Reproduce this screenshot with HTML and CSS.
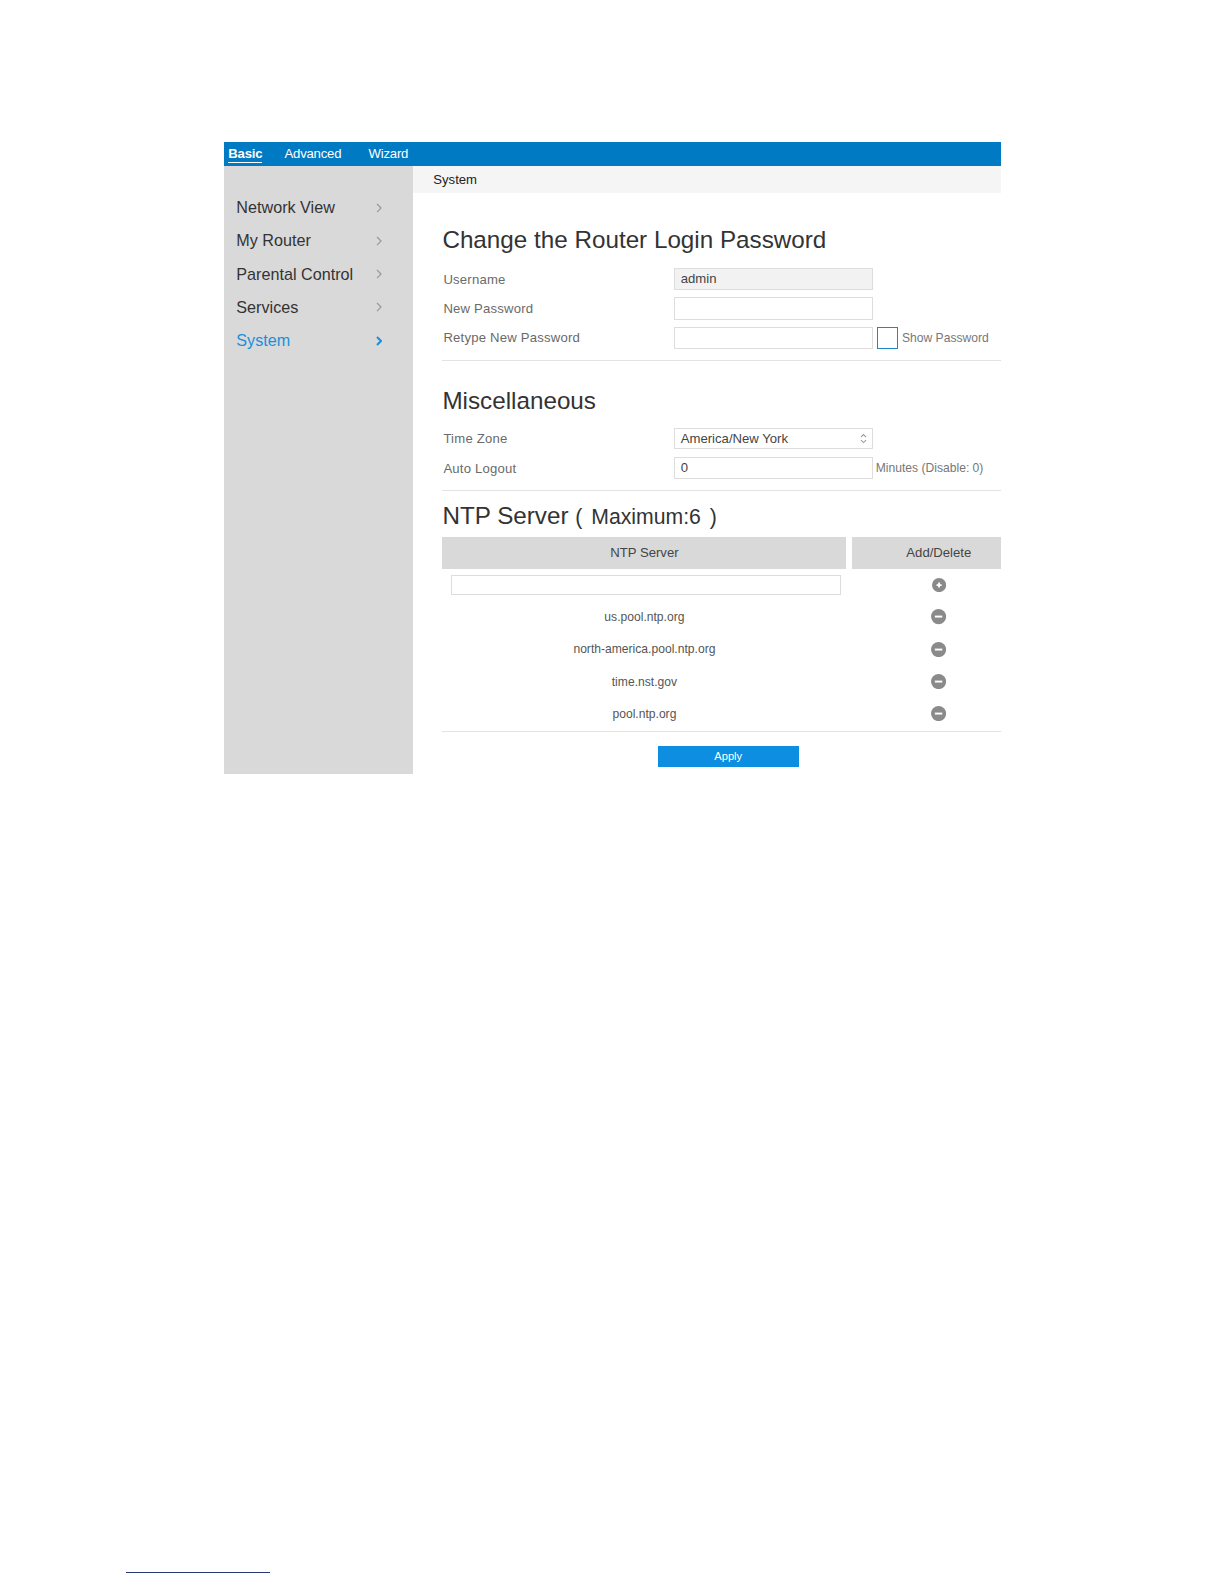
FILE: index.html
```html
<!doctype html>
<html lang="en">
<head>
	<meta charset="UTF-8" />
	<title>System</title>
<link rel="stylesheet" href="styles.css">
</head>
<body>
	<section id="wrap">
		<nav class="topbar">
			<a href="javascript:;" class="active">Basic</a>
			<a href="javascript:;">Advanced</a>
			<a href="javascript:;">Wizard</a>
		</nav>
		<div class="main">
			<ul class="side">
				<li><span>Network View</span><svg class="chev" width="6" height="10" viewBox="0 0 6 10"><polyline points="1,1 5,5 1,9"/></svg></li>
				<li><span>My Router</span><svg class="chev" width="6" height="10" viewBox="0 0 6 10"><polyline points="1,1 5,5 1,9"/></svg></li>
				<li><span>Parental Control</span><svg class="chev" width="6" height="10" viewBox="0 0 6 10"><polyline points="1,1 5,5 1,9"/></svg></li>
				<li><span>Services</span><svg class="chev" width="6" height="10" viewBox="0 0 6 10"><polyline points="1,1 5,5 1,9"/></svg></li>
				<li class="active"><span>System</span><svg class="chev" width="6" height="10" viewBox="0 0 6 10"><polyline points="1,1 5,5 1,9"/></svg></li>
			</ul>
			<div class="content">
				<div class="crumb">System</div>
				<div class="panel">
					<h2 class="first">Change the Router Login Password</h2>
					<div class="row">
						<label>Username</label>
						<div class="field gray">admin</div>
					</div>
					<div class="row">
						<label>New Password</label>
						<div class="field"></div>
					</div>
					<div class="row">
						<label>Retype New Password</label>
						<div class="field"></div>
						<span class="check"></span>
						<span class="note">Show Password</span>
					</div>
					<hr />

					<h2>Miscellaneous</h2>
					<div class="row">
						<label>Time Zone</label>
						<div class="field select">
							<span>America/New York</span>
							<svg width="7" height="11" viewBox="0 0 7 11"><polyline points="1,4 3.5,1.5 6,4"/><polyline points="1,7 3.5,9.5 6,7"/></svg>
						</div>
					</div>
					<div class="row">
						<label>Auto Logout</label>
						<div class="field">0</div>
						<span class="note tight">Minutes (Disable: 0)</span>
					</div>
					<hr />

					<h2 class="ntp">NTP Server <small>( Maximum:6 )</small></h2>
					<div class="table">
						<div class="th">NTP Server</div>
						<div class="th op">Add/Delete</div>

						<div class="td"><div class="add-input"></div></div>
						<div class="td op"><svg class="ic" width="14" height="14" viewBox="0 0 14 14"><circle cx="7" cy="7" r="7"/><path d="M4.5 7h5M7 4.5v5"/></svg></div>

						<div class="td">us.pool.ntp.org</div>
						<div class="td op"><svg class="ic" width="15" height="15" viewBox="0 0 14 14"><circle cx="7" cy="7" r="7"/><path d="M3.6 7h6.8"/></svg></div>

						<div class="td">north-america.pool.ntp.org</div>
						<div class="td op"><svg class="ic" width="15" height="15" viewBox="0 0 14 14"><circle cx="7" cy="7" r="7"/><path d="M3.6 7h6.8"/></svg></div>

						<div class="td">time.nst.gov</div>
						<div class="td op"><svg class="ic" width="15" height="15" viewBox="0 0 14 14"><circle cx="7" cy="7" r="7"/><path d="M3.6 7h6.8"/></svg></div>

						<div class="td">pool.ntp.org</div>
						<div class="td op"><svg class="ic" width="15" height="15" viewBox="0 0 14 14"><circle cx="7" cy="7" r="7"/><path d="M3.6 7h6.8"/></svg></div>
					</div>
					<hr class="last" />
					<a href="javascript:;" class="apply">Apply</a>
				</div>
			</div>
		</div>
	</section>
	<div class="footline"></div>
</body>
</html>
```

FILE: styles.css
```css
*{
	margin: 0;
	padding: 0;
	box-sizing: border-box;
}
html{
	zoom: 1.0101;
}
html, body{
	overflow: hidden;
}
body{
	background: #fff;
	font-family: "Liberation Sans", Arial, sans-serif;
	color: #333;
	padding-top: 141px;
}
#wrap{
	width: 769px;
	margin-left: 222px;
}
.topbar{
	height: 23px;
	background: #007ac2;
	display: flex;
	align-items: center;
	padding-left: 4px;
}
.topbar a{
	color: #fff;
	text-decoration: none;
	font-size: 13px;
	line-height: 15px;
	margin-right: 22px;
	letter-spacing: -0.2px;
	border-bottom: 1px solid transparent;
	margin-top: 1px;
}
.topbar a:nth-child(2){
	margin-right: 27px;
}
.topbar a.active{
	font-weight: bold;
	border-bottom-color: #fff;
}

.main{
	display: flex;
}
.side{
	width: 187px;
	background: #d9d9d9;
	list-style: none;
	padding-top: 25px;
}
.side li{
	height: 33px;
	display: flex;
	align-items: center;
	padding-left: 12px;
	font-size: 16px;
	color: #333;
}
.side li span{
	width: 138px;
}
.chev polyline{
	fill: none;
	stroke: #999;
	stroke-width: 1.2;
}
.side li.active{
	color: #1a8fdc;
}
.side li.active .chev polyline{
	stroke: #1a8fdc;
	stroke-width: 2;
}

.content{
	flex: 1;
	padding-bottom: 7px;
}
.crumb{
	height: 27px;
	background: #f5f5f5;
	padding-left: 20px;
	font-size: 13px;
	line-height: 27px;
	color: #222;
}
.panel{
	padding-left: 29px;
}
h2{
	font-size: 24px;
	font-weight: normal;
	line-height: 28px;
	color: #333;
	margin: 26px 0 9px;
}
h2.first{
	margin-top: 33px;
	margin-bottom: 10px;
}
h2.ntp{
	margin: 11px 0 7px;
}
h2 small{
	font-size: 21px;
	line-height: 20px;
	word-spacing: 3px;
}
.row{
	height: 29px;
	display: flex;
	align-items: center;
}
.row label{
	width: 229px;
	font-size: 13px;
	color: #6a6a6a;
	padding-left: 1px;
	letter-spacing: 0.2px;
}
.field{
	width: 197px;
	height: 22px;
	border: 1px solid #ddd;
	background: #fff;
	font-size: 13px;
	color: #444;
	line-height: 20px;
	padding-left: 6px;
}
.field.gray{
	background: #f2f2f2;
}
.select{
	display: flex;
	justify-content: space-between;
	align-items: center;
	padding-right: 5px;
	height: 21px;
}
.select svg polyline{
	fill: none;
	stroke: #999;
	stroke-width: 1;
}
.check{
	width: 21px;
	height: 22px;
	border: 1.5px solid #1e88c8;
	margin: 0 4px 0 4px;
}
.note{
	font-size: 12px;
	color: #777;
}
.note.tight{
	margin-left: 3px;
}
hr{
	border: 0;
	border-top: 1px solid #e3e3e3;
	margin-top: 6px;
}
.row + .row + hr{
	margin-top: 7px;
}

.table{
	display: grid;
	grid-template-columns: 400px 147px;
	column-gap: 6px;
}
.th{
	height: 31px;
	background: #d9d9d9;
	font-size: 13px;
	color: #444;
	text-align: center;
	line-height: 31px;
}
.td{
	height: 32px;
	font-size: 12px;
	color: #555;
	display: flex;
	align-items: center;
	justify-content: center;
}
.op{
	padding-left: 24px;
}
.add-input{
	width: 386px;
	height: 20px;
	border: 1px solid #ddd;
	margin-left: 4px;
}
.ic circle{
	fill: #8a8a8a;
}
.ic path{
	stroke: #fff;
	stroke-width: 1.8;
}
hr.last{
	margin-top: 1px;
}
.apply{
	display: block;
	width: 140px;
	height: 21px;
	margin: 14px 0 0 213px;
	background: #0d8ee0;
	color: #fff;
	font-size: 11px;
	line-height: 21px;
	text-align: center;
	text-decoration: none;
}
.footline{
	width: 142px;
	height: 1px;
	background: #2a3a78;
	margin: 790px 0 0 125px;
}
```
